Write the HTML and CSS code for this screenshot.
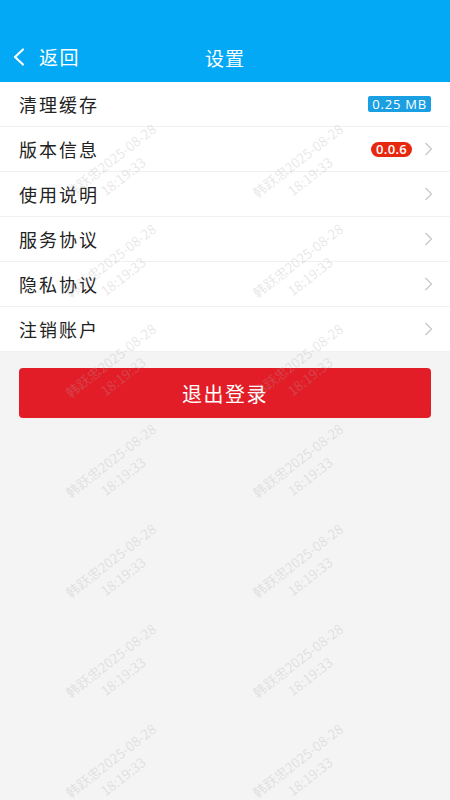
FILE: index.html
```html
<!DOCTYPE html>
<html lang="zh">
<head>
<meta charset="utf-8">
<title>设置</title>
<link rel="stylesheet" href="styles.css">
</head>
<body>
<div class="page">
  <header class="header">
    <div class="back">
      <svg class="back-icon" width="14" height="18" viewBox="0 0 14 18"><path d="M11 1.5 L3 9 L11 16.5" fill="none" stroke="#fff" stroke-width="2.2" stroke-linecap="round" stroke-linejoin="round"/></svg>
      <span class="back-text">返回</span>
    </div>
    <div class="title">设置</div>
  </header>
  <ul class="list">
    <li class="row"><span class="label">清理缓存</span><span class="badge badge-blue">0.25 MB</span></li>
    <li class="row"><span class="label">版本信息</span><span class="right"><span class="badge badge-red">0.0.6</span><svg class="chev" width="9" height="14" viewBox="0 0 9 14"><path d="M1.5 1 L7.5 7 L1.5 13" fill="none" stroke="#c8c8c8" stroke-width="1.3"/></svg></span></li>
    <li class="row"><span class="label">使用说明</span><svg class="chev" width="9" height="14" viewBox="0 0 9 14"><path d="M1.5 1 L7.5 7 L1.5 13" fill="none" stroke="#c8c8c8" stroke-width="1.3"/></svg></li>
    <li class="row"><span class="label">服务协议</span><svg class="chev" width="9" height="14" viewBox="0 0 9 14"><path d="M1.5 1 L7.5 7 L1.5 13" fill="none" stroke="#c8c8c8" stroke-width="1.3"/></svg></li>
    <li class="row"><span class="label">隐私协议</span><svg class="chev" width="9" height="14" viewBox="0 0 9 14"><path d="M1.5 1 L7.5 7 L1.5 13" fill="none" stroke="#c8c8c8" stroke-width="1.3"/></svg></li>
    <li class="row"><span class="label">注销账户</span><svg class="chev" width="9" height="14" viewBox="0 0 9 14"><path d="M1.5 1 L7.5 7 L1.5 13" fill="none" stroke="#c8c8c8" stroke-width="1.3"/></svg></li>
  </ul>
  <div class="btn-wrap"><button class="logout">退出登录</button></div>

  <div class="watermarks">
    <div class="wm"><span>韩跃忠2025-08-28</span><span>18:19:33</span></div>
    <div class="wm"><span>韩跃忠2025-08-28</span><span>18:19:33</span></div>
    <div class="wm"><span>韩跃忠2025-08-28</span><span>18:19:33</span></div>
    <div class="wm"><span>韩跃忠2025-08-28</span><span>18:19:33</span></div>
    <div class="wm"><span>韩跃忠2025-08-28</span><span>18:19:33</span></div>
    <div class="wm"><span>韩跃忠2025-08-28</span><span>18:19:33</span></div>
    <div class="wm"><span>韩跃忠2025-08-28</span><span>18:19:33</span></div>
    <div class="wm"><span>韩跃忠2025-08-28</span><span>18:19:33</span></div>
    <div class="wm"><span>韩跃忠2025-08-28</span><span>18:19:33</span></div>
    <div class="wm"><span>韩跃忠2025-08-28</span><span>18:19:33</span></div>
    <div class="wm"><span>韩跃忠2025-08-28</span><span>18:19:33</span></div>
    <div class="wm"><span>韩跃忠2025-08-28</span><span>18:19:33</span></div>
    <div class="wm"><span>韩跃忠2025-08-28</span><span>18:19:33</span></div>
    <div class="wm"><span>韩跃忠2025-08-28</span><span>18:19:33</span></div>
  </div>
</div>
</body>
</html>
```

FILE: styles.css
```css
* { box-sizing: border-box; }
html, body { margin: 0; padding: 0; }
body {
  background: #f4f4f4;
  font-family: "Noto Sans CJK SC", "Noto Sans", sans-serif;
}
.page {
  position: relative;
  width: 450px;
  height: 800px;
  overflow: hidden;
  background: #f4f4f4;
}
.header {
  height: 82px;
  background: #03a9f4;
  color: #fff;
  display: flex;
  align-items: flex-end;
  justify-content: center;
  position: relative;
  padding-bottom: 11px;
}
.back {
  position: absolute;
  left: 12px;
  bottom: 13px;
  display: flex;
  align-items: center;
  gap: 13px;
}
.back-icon { display: block; }
.back-text { font-size: 19px; letter-spacing: 1.5px; line-height: 24px; }
.title { font-size: 19px; letter-spacing: 1px; line-height: 26px; }

.list {
  list-style: none;
  margin: 0;
  padding: 0;
  background: #fff;
}
.row {
  height: 45px;
  display: flex;
  align-items: center;
  justify-content: space-between;
  padding: 0 17px 0 19px;
  border-bottom: 1px solid #f0f0f0;
}
.label {
  font-size: 18px;
  letter-spacing: 2px;
  color: #222;
}
.right { display: flex; align-items: center; gap: 12px; }
.chev { display: block; }
.badge {
  color: #fff;
  font-family: "Open Sans", "Noto Sans", sans-serif;
  font-size: 13px;
  line-height: 16px;
}
.badge-blue {
  background: #1a9fe3;
  border-radius: 2px;
  padding: 0 4px;
  height: 16px;
  letter-spacing: 0.8px;
  margin-right: 2px;
}
.badge-red {
  background: #e8280e;
  border-radius: 8px;
  padding: 0 5px;
  height: 15px;
  line-height: 15px;
  font-weight: 600;
  letter-spacing: 0.3px;
}
.btn-wrap { padding: 16px 19px; }
.logout {
  display: block;
  width: 100%;
  height: 50px;
  border: none;
  border-radius: 4px;
  background: #e31d27;
  color: #fff;
  font-family: "Noto Sans CJK SC", sans-serif;
  font-size: 20px;
  letter-spacing: 1.5px;
}

.watermarks {
  position: absolute;
  left: 23px;
  top: 118px;
  width: 374px;
  display: grid;
  grid-template-columns: 187px 187px;
  grid-auto-rows: 100px;
  pointer-events: none;
}
.wm {
  display: flex;
  flex-direction: column;
  align-items: center;
  justify-content: center;
  transform: rotate(-38deg);
  color: rgba(170, 170, 170, 0.28);
  font-family: "Noto Sans CJK SC", sans-serif;
  font-size: 13.5px;
  line-height: 20px;
  white-space: nowrap;
}
```
